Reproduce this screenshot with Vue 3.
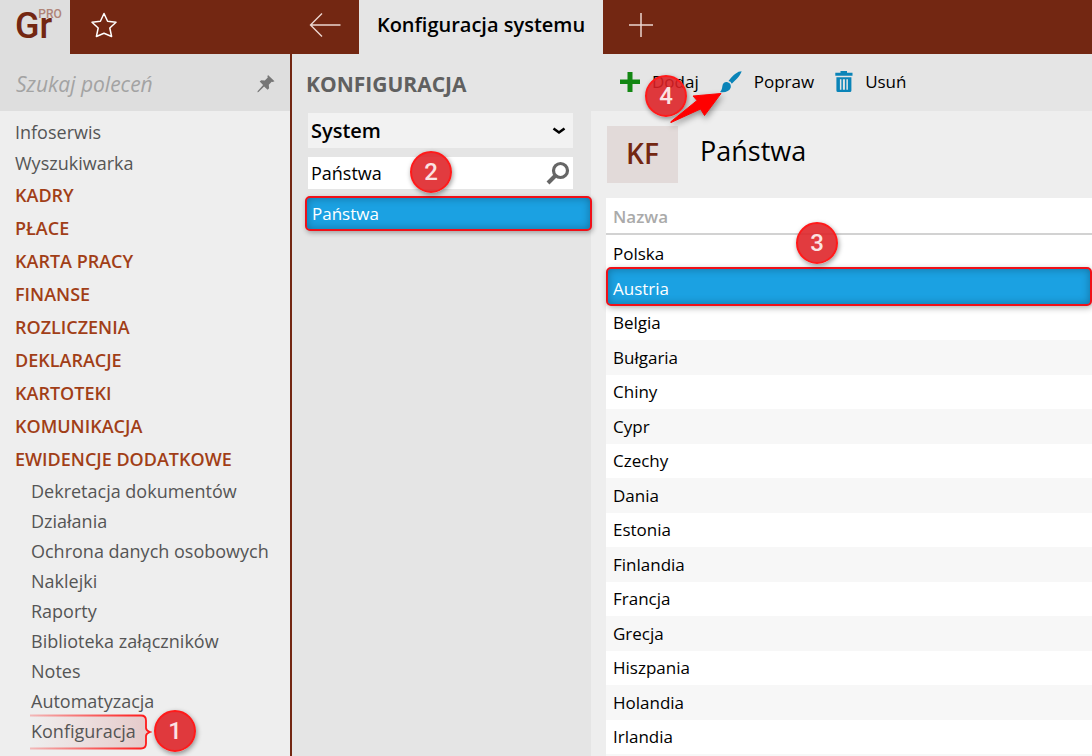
<script setup>
import { ref } from 'vue'

const command = ref('')
const area = ref('System')
const filter = ref('Państwa')
const selected = ref('Austria')

const shortcuts = ['Infoserwis', 'Wyszukiwarka']
const groups = ['KADRY', 'PŁACE', 'KARTA PRACY', 'FINANSE', 'ROZLICZENIA', 'DEKLARACJE', 'KARTOTEKI', 'KOMUNIKACJA', 'EWIDENCJE DODATKOWE']
const subItems = ['Dekretacja dokumentów', 'Działania', 'Ochrona danych osobowych', 'Naklejki', 'Raporty', 'Biblioteka załączników', 'Notes', 'Automatyzacja', 'Konfiguracja']
const countries = ['Polska', 'Austria', 'Belgia', 'Bułgaria', 'Chiny', 'Cypr', 'Czechy', 'Dania', 'Estonia', 'Finlandia', 'Francja', 'Grecja', 'Hiszpania', 'Holandia', 'Irlandia']
</script>

<template>
  <div class="app">
    <header class="topbar">
      <div class="logo"><span class="logo-main">Gr</span><span class="logo-sup">PRO</span></div>
      <div class="topbar-left">
        <button class="icon-btn" aria-label="Ulubione">
          <svg width="28" height="28" viewBox="0 0 28 28" fill="none" stroke="#fff" stroke-width="1.5" stroke-linejoin="round">
            <path d="M14 2.500L17.600 10.300 26 11.300 19.800 17 21.600 25.500 14 22.300 6.400 25.500 8.200 17 2 11.300 10.400 10.300z" />
          </svg>
        </button>
        <button class="icon-btn back" aria-label="Wstecz">
          <svg width="32" height="26" viewBox="0 0 32 26" fill="none" stroke="#ecd6d0" stroke-width="1.4">
            <path d="M31.500 13H1.500M13 1.500L1.500 13 13 24.500" />
          </svg>
        </button>
      </div>
      <div class="tab">Konfiguracja systemu</div>
      <button class="icon-btn add-tab" aria-label="Nowa karta">
        <svg width="26" height="26" viewBox="0 0 26 26" fill="none" stroke="#ecd6d0" stroke-width="1.5">
          <path d="M1 13h24M13 1v24" />
        </svg>
      </button>
    </header>

    <div class="body">
      <nav class="sidebar">
        <div class="command">
          <input v-model="command" type="text" placeholder="Szukaj poleceń" aria-label="Szukaj poleceń" />
          <button class="icon-btn" aria-label="Przypnij">
            <svg width="18" height="18" viewBox="0 0 18 18" fill="#777">
              <path d="M11 0l6.500 6.300-1.800.6-1-.1-2.900 3 .3 3.500-1.500 1.500-3.500-3.400L1.500 17 .3 17.200.8 16l5.300-5.900L2.700 6.600 4.200 5.200l3.600.3 3-2.900-.4-1.200z" />
            </svg>
          </button>
        </div>
        <ul class="menu">
          <li v-for="item in shortcuts" :key="item" class="shortcut"><a href="#">{{ item }}</a></li>
          <li v-for="item in groups" :key="item" class="group"><a href="#">{{ item }}</a></li>
          <li v-for="item in subItems" :key="item" class="sub">
            <template v-if="item === 'Konfiguracja'">
              <svg class="bracket" width="122" height="38" viewBox="0 0 122 38" fill="none">
                <defs>
                  <linearGradient id="fadeFill" x1="0" x2="1" y1="0" y2="0">
                    <stop offset="0" stop-color="#e03030" stop-opacity="0" />
                    <stop offset="1" stop-color="#b82020" stop-opacity=".18" />
                  </linearGradient>
                  <linearGradient id="fadeLine" gradientUnits="userSpaceOnUse" x1="0" x2="116" y1="0" y2="0">
                    <stop offset="0" stop-color="#ff1a1a" stop-opacity=".25" />
                    <stop offset="1" stop-color="#ff1a1a" />
                  </linearGradient>
                </defs>
                <path d="M0 2.500H111q5 0 5 5V15q0 2.500 4 4-4 1.500-4 4v7.500q0 5-5 5H0z" fill="url(#fadeFill)" />
                <path d="M0 2.500H111q5 0 5 5V15q0 2.500 4 4-4 1.500-4 4v7.500q0 5-5 5H0" stroke="url(#fadeLine)" stroke-width="1.800" />
              </svg>
              <span class="badge badge-1">1</span>
            </template>
            <a href="#">{{ item }}</a>
          </li>
        </ul>
      </nav>

      <section class="config">
        <h2>KONFIGURACJA</h2>
        <div class="field select-field">
          <select v-model="area" aria-label="Obszar">
            <option>System</option>
          </select>
          <svg width="14" height="10" viewBox="0 0 14 10" fill="none" stroke="#000" stroke-width="2.600">
            <path d="M1.500 2.500L7 6.500l5.500-4" />
          </svg>
        </div>
        <div class="field search-field">
          <input v-model="filter" type="text" aria-label="Filtr konfiguracji" />
          <svg width="24" height="24" viewBox="0 0 24 24" fill="none" stroke="#666">
            <circle cx="14.500" cy="9.500" r="7" stroke-width="3.200" />
            <path d="M9.500 14.500L2 22" stroke-width="4" />
          </svg>
          <span class="badge badge-2">2</span>
        </div>
        <button class="result">Państwa</button>
      </section>

      <main class="content">
        <div class="toolbar">
          <button class="tool">
            <svg width="20" height="20" viewBox="0 0 20 20" fill="#138713"><path d="M7.500 0h5v7.500H20v4.500h-7.500V20h-5v-8H0V7.500h7.500z" /></svg>
            <span>Dodaj</span>
          </button>
          <button class="tool tool-edit">
            <svg width="22" height="22" viewBox="0 0 22 22" fill="#0a84b8">
              <path d="M21.600.3C18 .2 13.500 3.500 8.500 10.100q2.200.4 3.300 2.600C17.500 7.500 20.500 4 21.600.3zM7.600 11.200c-2.800-.5-4.800 1-5.200 3.700C2.100 17.500 1.500 19.500 0 21c5.400.7 9.400-.7 10.700-4.300.7-2.500-.5-4.800-3.100-5.500z" />
            </svg>
            <span>Popraw</span>
          </button>
          <button class="tool tool-delete">
            <svg width="18" height="22" viewBox="0 0 18 22" fill="#0a84b8" fill-rule="evenodd">
              <path d="M5.500 0h6.500v1.800H17.500v3H.3v-3h5.200zM1.400 6.200h15v13.300q0 1.500-1.500 1.500h-12q-1.500 0-1.500-1.500zm3.500 2v10.600h1.500V8.200zm3 0v10.600h2V8.200zm3.500 0v10.600h1.500V8.200z" />
            </svg>
            <span>Usuń</span>
          </button>
          <span class="badge badge-4">4</span>
          <svg class="pointer" width="56" height="34" viewBox="0 0 56 34">
            <path d="M1.500 30L28 8.500 24 4 52 1.500 35.500 23.500 31.500 17 2 30.500z" fill="#f00" stroke="#f00" stroke-linejoin="round" />
          </svg>
        </div>

        <div class="title">
          <div class="tile">KF</div>
          <h1>Państwa</h1>
        </div>

        <div class="grid">
          <table>
            <thead>
              <tr><th scope="col">Nazwa</th></tr>
            </thead>
            <tbody>
              <tr v-for="name in countries" :key="name" :class="{ selected: name === selected }" @click="selected = name">
                <td>{{ name }}</td>
              </tr>
            </tbody>
          </table>
          <span class="badge badge-3">3</span>
        </div>
      </main>
    </div>
  </div>
</template>

<style>
body {
  overflow: hidden;
}
</style>

<style scoped>
* {
  box-sizing: border-box;
}
.app {
  height: 100vh;
  display: flex;
  flex-direction: column;
  font-family: "Open Sans", "Noto Sans", sans-serif;
  font-size: 17px;
  color: #000;
  background: #eee;
}
button,
input,
select {
  font: inherit;
  color: inherit;
  border: 0;
  padding: 0;
  background: none;
  outline: none;
}
svg {
  display: block;
  flex: none;
}
a {
  color: inherit;
  text-decoration: none;
}
.icon-btn {
  display: flex;
}
.topbar {
  height: 54px;
  flex: none;
  display: flex;
  align-items: center;
  background: #732712;
}
.topbar .icon-btn {
  padding-bottom: 4px;
}
.logo {
  width: 70px;
  height: 54px;
  padding: 8px 0 0 15px;
  display: flex;
  align-items: flex-start;
  background: #dedede;
  color: #732712;
}
.logo-main {
  font: 500 36px/36px Roboto, sans-serif;
}
.logo-sup {
  margin-left: -14px;
  font: 500 12px/12px Roboto, sans-serif;
  color: #b08478;
}
.topbar-left {
  width: 289px;
  padding: 0 18px 0 20px;
  display: flex;
  align-items: center;
  justify-content: space-between;
}
.tab {
  width: 244px;
  height: 54px;
  line-height: 50px;
  text-align: center;
  font-size: 20px;
  font-weight: 600;
  background: #e5e5e5;
}
.add-tab {
  margin-left: 25px;
}
.body {
  flex: 1;
  min-height: 0;
  display: flex;
}
.sidebar {
  width: 292px;
  flex: none;
  background: #eee;
  border-right: 2px solid #732712;
}
.command {
  height: 57px;
  padding: 2px 15px 0 16px;
  display: flex;
  align-items: center;
  justify-content: space-between;
  background: #dedede;
}
.command input {
  width: 220px;
  font-size: 21px;
  font-style: italic;
}
.command input::placeholder {
  color: #a3a3a3;
  opacity: 1;
}
.menu {
  list-style: none;
  margin: 0;
  padding: 6px 15px 0;
  font-size: 18px;
  color: #555;
}
.shortcut {
  line-height: 31px;
}
.group {
  line-height: 33px;
  font-weight: 600;
  color: #a13e17;
}
.sub {
  position: relative;
  padding-left: 16px;
  line-height: 30px;
  white-space: nowrap;
}
.sub a {
  position: relative;
}
.bracket {
  position: absolute;
  left: 15px;
  top: -3px;
}
.config {
  width: 299px;
  flex: none;
  padding: 0 18px 0 16px;
  background: #e5e5e5;
}
h2 {
  margin: 0 0 0 -2px;
  padding-top: 1px;
  font-size: 21px;
  line-height: 58px;
  font-weight: 700;
  color: #606060;
}
.field {
  position: relative;
  display: flex;
  align-items: center;
}
.field input,
.field select {
  flex: 1;
  width: 100%;
  height: 100%;
  padding: 0 3px;
}
.select-field {
  height: 35px;
  background: #f2f2f2;
}
.select-field select {
  appearance: none;
  font-size: 20px;
  font-weight: 600;
}
.select-field svg {
  position: absolute;
  right: 7px;
  pointer-events: none;
}
.search-field {
  height: 32px;
  margin-top: 9px;
  background: #fff;
  font-size: 18px;
}
.search-field svg {
  position: absolute;
  right: 3px;
}
.result {
  display: block;
  width: 287px;
  height: 35px;
  margin: 7px 0 0 -3px;
  padding: 0 5px;
  text-align: left;
  color: #fff;
  background: #1ba1e2;
  border: 2px solid #f01018;
  border-radius: 5px;
  box-shadow: 1px 2px 5px rgba(0, 0, 0, 0.3), inset 0 0 8px rgba(0, 0, 0, 0.3);
}
.content {
  flex: 1;
  min-width: 0;
  display: flex;
  flex-direction: column;
}
.toolbar {
  position: relative;
  height: 57px;
  flex: none;
  padding: 0 0 2px 29px;
  display: flex;
  align-items: center;
  gap: 21px;
  background: #e5e5e5;
}
.tool {
  display: flex;
  align-items: center;
  gap: 12px;
}
.title {
  height: 87px;
  flex: none;
  padding: 15px 0 0 16px;
  display: flex;
  gap: 22px;
}
.tile {
  width: 71px;
  height: 57px;
  line-height: 55px;
  text-align: center;
  font-size: 28px;
  font-weight: 600;
  color: #732712;
  background: #e2dad9;
}
h1 {
  margin: 0;
  font-size: 27px;
  line-height: 50px;
  font-weight: 400;
}
.grid {
  position: relative;
  flex: 1;
  margin-left: 15px;
  background: #f7f7f7;
}
table {
  width: 100%;
  border-collapse: separate;
  border-spacing: 0;
}
th,
td {
  height: 34px;
  padding: 0 7px;
  text-align: left;
  line-height: 34px;
  background: #fff;
}
th {
  height: 39px;
  padding-bottom: 2px;
  font-weight: 600;
  color: #aaa;
  background: linear-gradient(#d2d2d2, #d2d2d2) 0 35px / 100% 2px no-repeat #fff;
}
tbody tr:nth-child(even) td {
  height: 35px;
  background: #f7f7f7;
}
tbody tr.selected td {
  position: relative;
  z-index: 1;
  color: #fff;
  background: none;
}
tbody tr.selected td::before {
  content: "";
  position: absolute;
  inset: -4px 0 0 0;
  z-index: -1;
  background: #1ba1e2;
  border: 2px solid #f01018;
  border-radius: 5px;
  box-shadow: 1px 2px 6px rgba(0, 0, 0, 0.3), inset 0 0 8px rgba(0, 0, 0, 0.3);
}
.badge {
  position: absolute;
  z-index: 2;
  width: 42px;
  height: 42px;
  border: 2px solid #ff1a1a;
  border-radius: 50%;
  background: rgba(222, 32, 36, 0.88);
  color: #fbe3e3;
  font: 500 24px/38px Roboto, sans-serif;
  text-align: center;
  box-shadow: 1px 2px 5px rgba(0, 0, 0, 0.4);
}
.badge-1 {
  left: 139px;
  top: -6px;
}
.badge-2 {
  left: 102px;
  top: -6px;
}
.badge-3 {
  left: 190px;
  top: 24px;
}
.badge-4 {
  left: 54px;
  top: 21px;
}
.pointer {
  position: absolute;
  z-index: 3;
  left: 78px;
  top: 38px;
  filter: drop-shadow(1px 3px 3px rgba(0, 0, 0, 0.4));
  overflow: visible;
}
</style>
